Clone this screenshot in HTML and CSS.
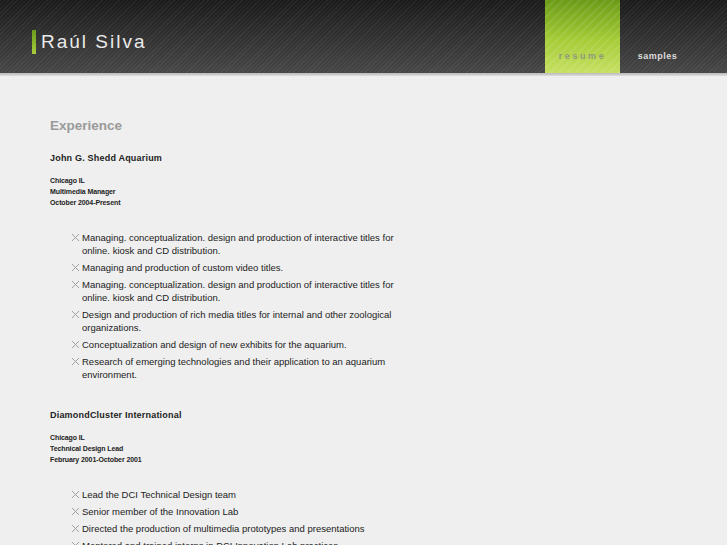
FILE: index.html
```html
<!DOCTYPE html>
<html>
<head>
<meta charset="utf-8">
<link rel="stylesheet" href="styles.css">
</head>
<body>
<header class="header">
  <div class="logo"><span class="logo-bar"></span><span class="logo-text">Raúl Silva</span></div>
  <nav class="nav">
    <a class="nav-item active">resume</a>
    <a class="nav-item">samples</a>
  </nav>
</header>
<div class="rule"></div>
<main class="content">
  <h1 class="section-title">Experience</h1>

  <section class="job">
    <h2 class="company">John G. Shedd Aquarium</h2>
    <div class="meta">
      <div>Chicago IL</div>
      <div>Multimedia Manager</div>
      <div>October 2004-Present</div>
    </div>
    <ul class="duties">
      <li>Managing. conceptualization. design and production of interactive titles for online. kiosk and CD distribution.</li>
      <li>Managing and production of custom video titles.</li>
      <li>Managing. conceptualization. design and production of interactive titles for online. kiosk and CD distribution.</li>
      <li>Design and production of rich media titles for internal and other zoological organizations.</li>
      <li>Conceptualization and design of new exhibits for the aquarium.</li>
      <li>Research of emerging technologies and their application to an aquarium environment.</li>
    </ul>
  </section>

  <section class="job">
    <h2 class="company">DiamondCluster International</h2>
    <div class="meta">
      <div>Chicago IL</div>
      <div>Technical Design Lead</div>
      <div>February 2001-October 2001</div>
    </div>
    <ul class="duties">
      <li>Lead the DCI Technical Design team</li>
      <li>Senior member of the Innovation Lab</li>
      <li>Directed the production of multimedia prototypes and presentations</li>
      <li>Mentored and trained interns in DCI Innovation Lab practices</li>
    </ul>
  </section>
</main>
</body>
</html>
```

FILE: styles.css
```css
html, body {
  margin: 0;
  padding: 0;
  background: #efefef;
  font-family: "Liberation Sans", Arial, sans-serif;
}

.header {
  height: 73px;
  display: flex;
  justify-content: space-between;
  background:
    repeating-linear-gradient(135deg, rgba(255,255,255,0.05) 0 1px, rgba(0,0,0,0) 1px 3px),
    linear-gradient(#1b1b1b, #474747);
}

.logo {
  display: flex;
  align-items: center;
  padding-left: 32px;
  padding-top: 11px;
}

.logo-bar {
  width: 4px;
  height: 24px;
  background: linear-gradient(#6c9a1e, #a9cd3c);
  margin-right: 5px;
}

.logo-text {
  color: #eaeaea;
  font-size: 19px;
  letter-spacing: 2px;
}

.nav {
  display: flex;
  margin-right: 32px;
}

.nav-item {
  width: 75px;
  display: flex;
  align-items: flex-end;
  justify-content: center;
  padding-bottom: 12px;
  box-sizing: border-box;
  font-size: 9px;
  font-weight: bold;
  color: #dcdcdc;
  letter-spacing: 0.5px;
}

.nav-item.active {
  color: #8e9a7a;
  letter-spacing: 2.6px;
  background:
    repeating-linear-gradient(135deg, rgba(255,255,255,0.08) 0 2px, rgba(255,255,255,0) 2px 6px),
    linear-gradient(#6b9b17, #a6cc38 55%, #c6e063);
}

.rule {
  height: 3px;
  background: linear-gradient(#b9b9b9, #dedede);
}

.content {
  padding: 42px 0 0 50px;
}

.section-title {
  margin: 0 0 20px 0;
  font-size: 13.5px;
  font-weight: bold;
  color: #9a9a9a;
}

.job {
  margin-bottom: 29px;
}

.company {
  margin: 0 0 12px 0;
  font-size: 9px;
  font-weight: bold;
  color: #222;
  letter-spacing: 0.2px;
}

.meta {
  font-size: 7px;
  font-weight: bold;
  color: #222;
  line-height: 11px;
  letter-spacing: -0.1px;
}

.duties {
  list-style: none;
  margin: 23px 0 0 0;
  padding: 0 0 0 22px;
  width: 330px;
}

.duties li {
  position: relative;
  padding-left: 10px;
  font-size: 9.5px;
  line-height: 13px;
  color: #222;
  margin-bottom: 4px;
}

.duties li::before {
  content: "";
  position: absolute;
  left: 0;
  top: 3px;
  width: 7px;
  height: 7px;
  background:
    linear-gradient(45deg, transparent 45%, #a0a0a0 45% 55%, transparent 55%),
    linear-gradient(-45deg, transparent 45%, #a0a0a0 45% 55%, transparent 55%);
}
```
